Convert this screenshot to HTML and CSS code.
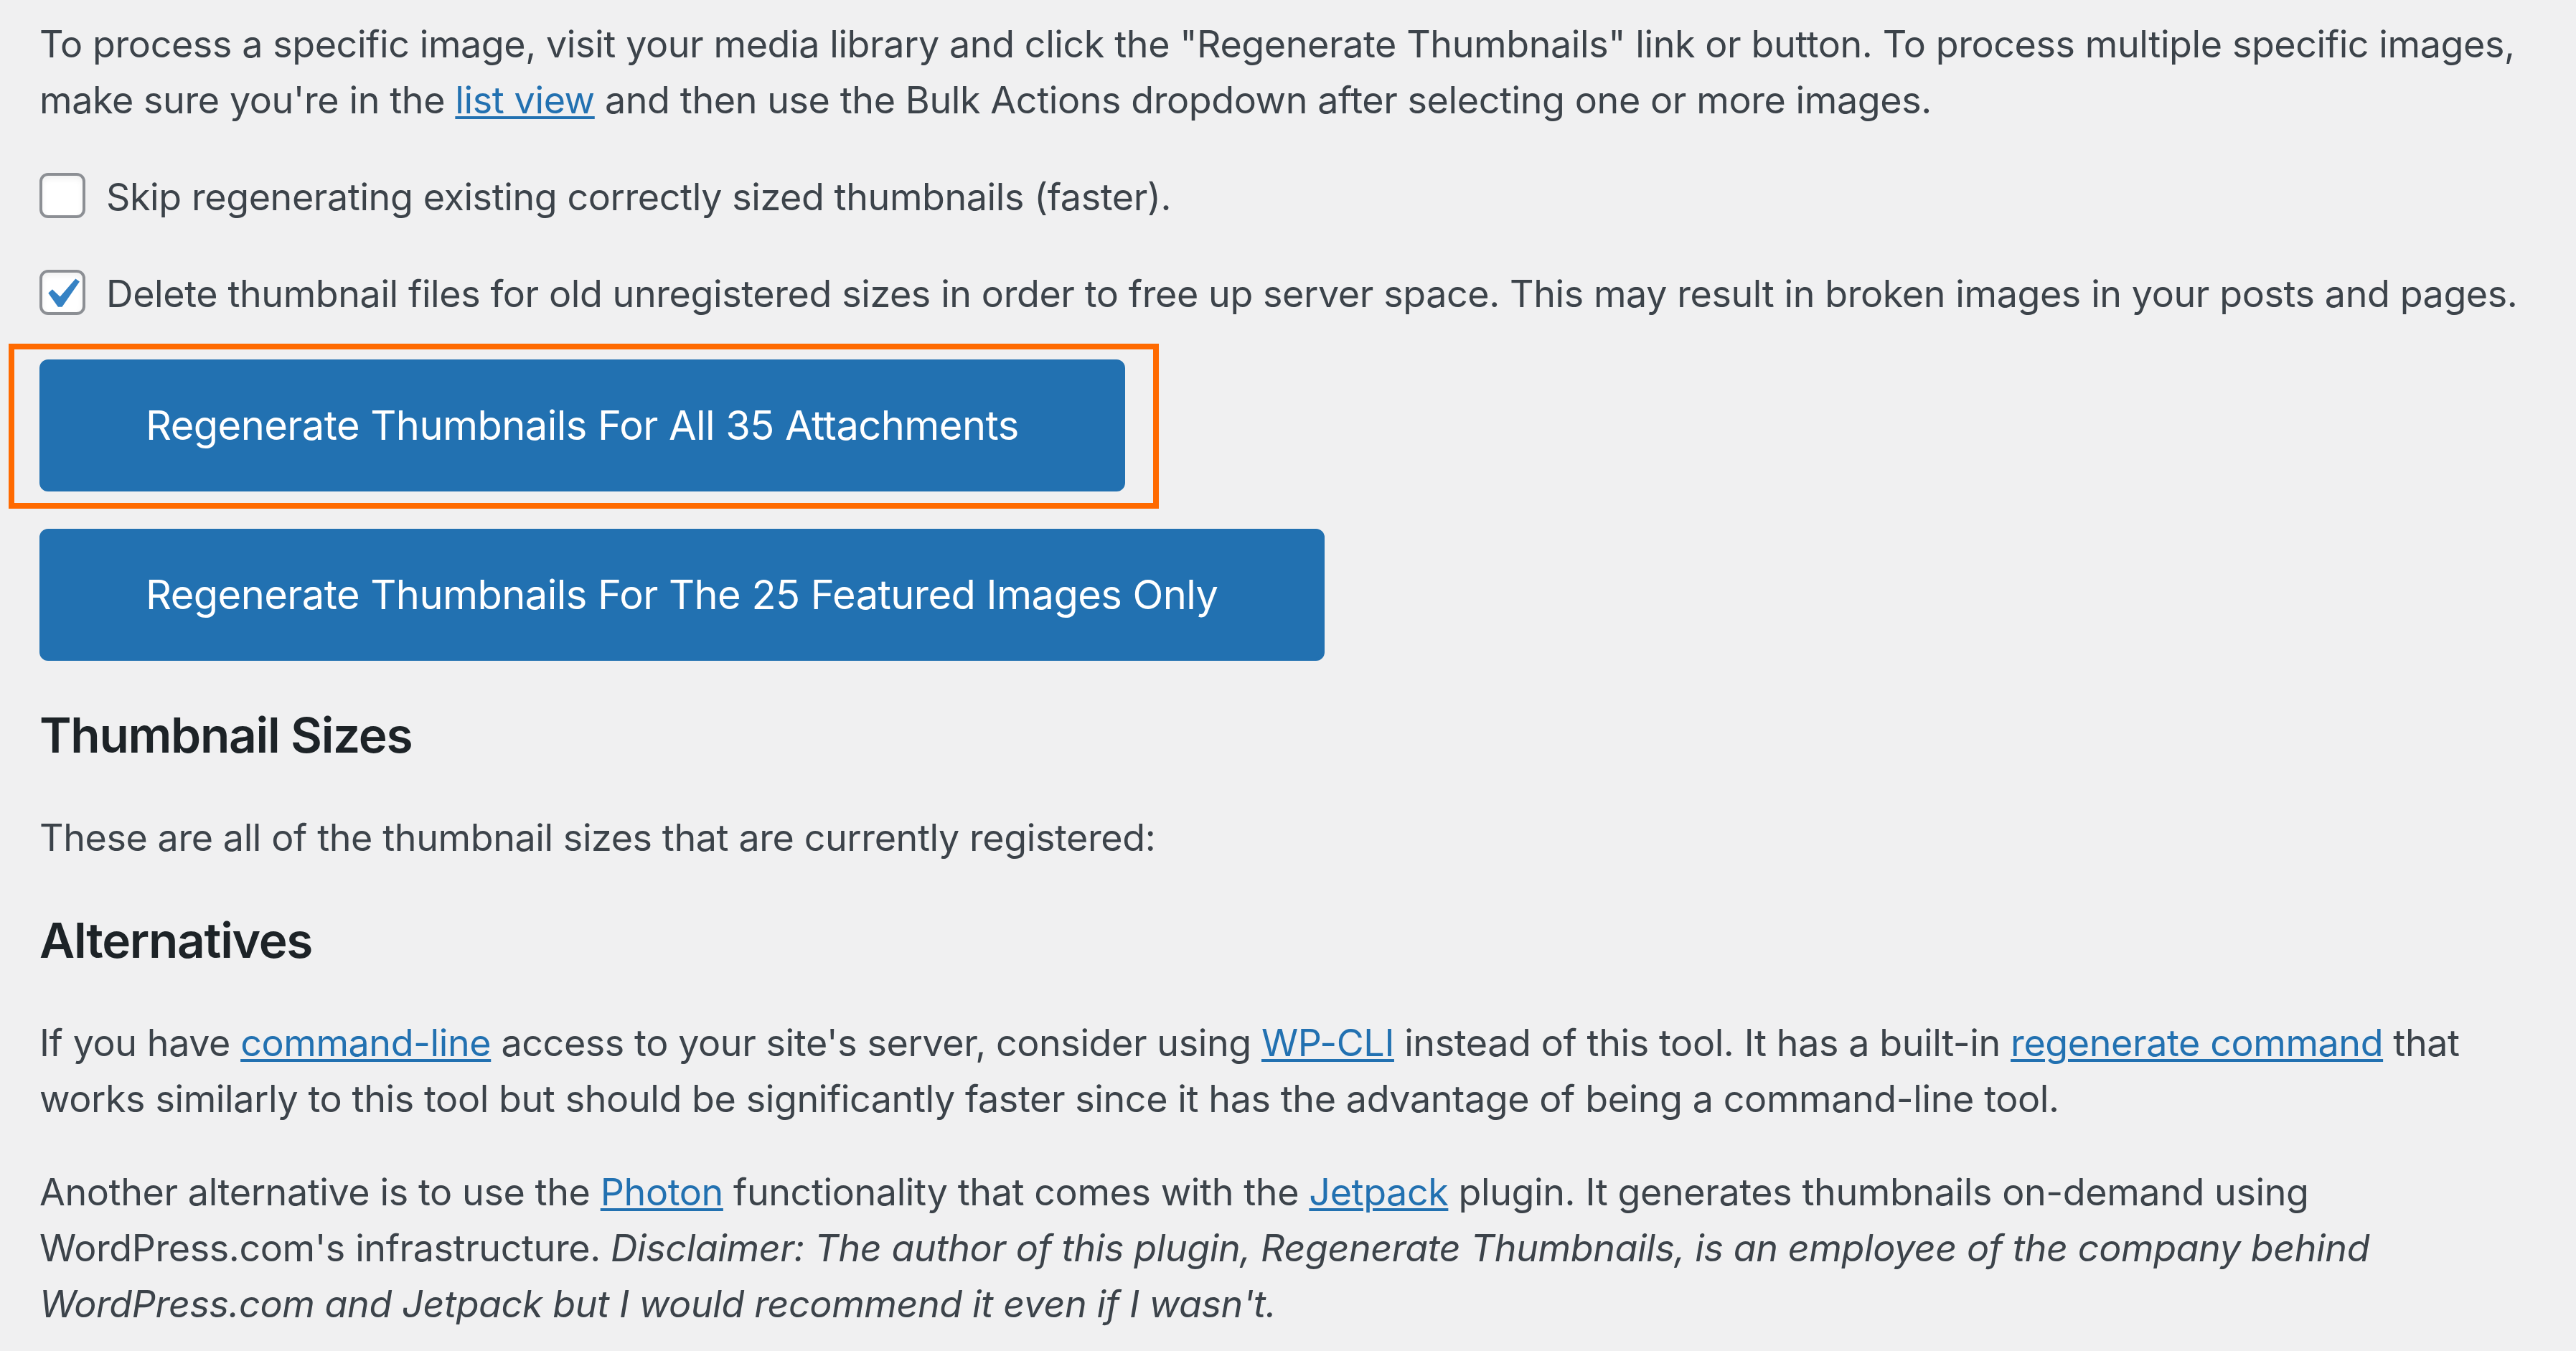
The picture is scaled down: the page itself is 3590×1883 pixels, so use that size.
FILE: index.html
```html
<!DOCTYPE html>
<html lang="en">
<head>
<meta charset="utf-8">
<title>Regenerate Thumbnails</title>
<link rel="stylesheet" href="styles.css">
</head>
<body>
<div class="wrap">
  <p class="text">To process a specific image, visit your media library and click the "Regenerate Thumbnails" link or button. To process multiple specific images,<br>make sure you're in the <a href="#">list view</a> and then use the Bulk Actions dropdown after selecting one or more images.</p>

  <p class="check-row">
    <label class="check-label">
      <span class="box"></span>
      <span class="check-text">Skip regenerating existing correctly sized thumbnails (faster).</span>
    </label>
  </p>

  <p class="check-row">
    <label class="check-label">
      <span class="box is-checked">
        <svg class="tick" viewBox="0 0 20 20" aria-hidden="true"><path d="M14.83 4.89l1.34.94-5.81 8.38H9.02L5.78 9.67l1.34-1.25 2.57 2.4z" fill="#3582c4"/></svg>
      </span>
      <span class="check-text">Delete thumbnail files for old unregistered sizes in order to free up server space. This may result in broken images in your posts and pages.</span>
    </label>
  </p>

  <p class="btn-row">
    <span class="btn-wrap">
      <button class="btn" type="button">Regenerate Thumbnails For All 35 Attachments</button>
      <span class="highlight"></span>
    </span>
  </p>

  <p class="btn-row">
    <button class="btn" type="button">Regenerate Thumbnails For The 25 Featured Images Only</button>
  </p>

  <h2 class="heading">Thumbnail Sizes</h2>

  <p class="text">These are all of the thumbnail sizes that are currently registered:</p>

  <h2 class="heading">Alternatives</h2>

  <p class="text">If you have <a href="#">command-line</a> access to your site's server, consider using <a href="#">WP-CLI</a> instead of this tool. It has a built-in <a href="#">regenerate command</a> that<br>works similarly to this tool but should be significantly faster since it has the advantage of being a command-line tool.</p>

  <p class="text">Another alternative is to use the <a href="#">Photon</a> functionality that comes with the <a href="#">Jetpack</a> plugin. It generates thumbnails on-demand using<br>WordPress.com's infrastructure. <em>Disclaimer: The author of this plugin, Regenerate Thumbnails, is an employee of the company behind<br>WordPress.com and Jetpack but I would recommend it even if I wasn't.</em></p>
</div>
</body>
</html>
```

FILE: styles.css
```css
html, body {
  margin: 0;
  padding: 0;
  background: #f0f0f1;
  overflow: hidden;
}

body {
  font-family: Inter, "Noto Sans", "Liberation Sans", sans-serif;
  font-size: 52px;
  line-height: 78px;
  letter-spacing: -0.4px;
  color: #3c434a;
}

.wrap {
  padding: 23px 0 0 55px;
}

.text {
  margin: 0 0 52px;
}

a {
  color: #2271b1;
  text-decoration: underline;
  text-decoration-thickness: 4px;
  text-underline-offset: 4px;
}

em {
  font-style: italic;
}

/* checkbox rows */
.check-row {
  margin: 0 0 52px;
  height: 83px;
}

.check-label {
  display: flex;
  align-items: flex-start;
}

.box {
  position: relative;
  flex: none;
  box-sizing: border-box;
  width: 64px;
  height: 63px;
  margin-top: 10px;
  margin-right: 29px;
  border: 4px solid #8c8f94;
  border-radius: 12px;
  background: #fff;
  box-shadow: inset 0 4px 8px rgba(0, 0, 0, 0.06);
}

.tick {
  position: absolute;
  left: -16px;
  top: -12px;
  width: 84px;
  height: 84px;
}

.check-text {
  margin-top: 5px;
  white-space: nowrap;
}

/* buttons */
.btn-row {
  margin: 0 0 52px;
  height: 184px;
}

.btn-wrap {
  position: relative;
  display: inline-block;
}

.btn {
  display: block;
  box-sizing: border-box;
  height: 184px;
  margin: 0;
  padding: 0 144px;
  border: 4px solid #2271b1;
  border-radius: 12px;
  background: #2271b1;
  color: #fff;
  font-family: Inter, "Noto Sans", "Liberation Sans", sans-serif;
  font-size: 56px;
  line-height: 176px;
  letter-spacing: -0.55px;
  font-weight: 400;
  white-space: nowrap;
  cursor: pointer;
}

.highlight {
  position: absolute;
  top: -22px;
  bottom: -24px;
  left: -43px;
  right: -47px;
  border: 8px solid #ff6a00;
  pointer-events: none;
}

/* headings */
.heading {
  margin: 67.6px 0;
  font-size: 67.6px;
  line-height: 72.8px;
  letter-spacing: -1.3px;
  font-weight: 600;
  color: #1d2327;
}
```
